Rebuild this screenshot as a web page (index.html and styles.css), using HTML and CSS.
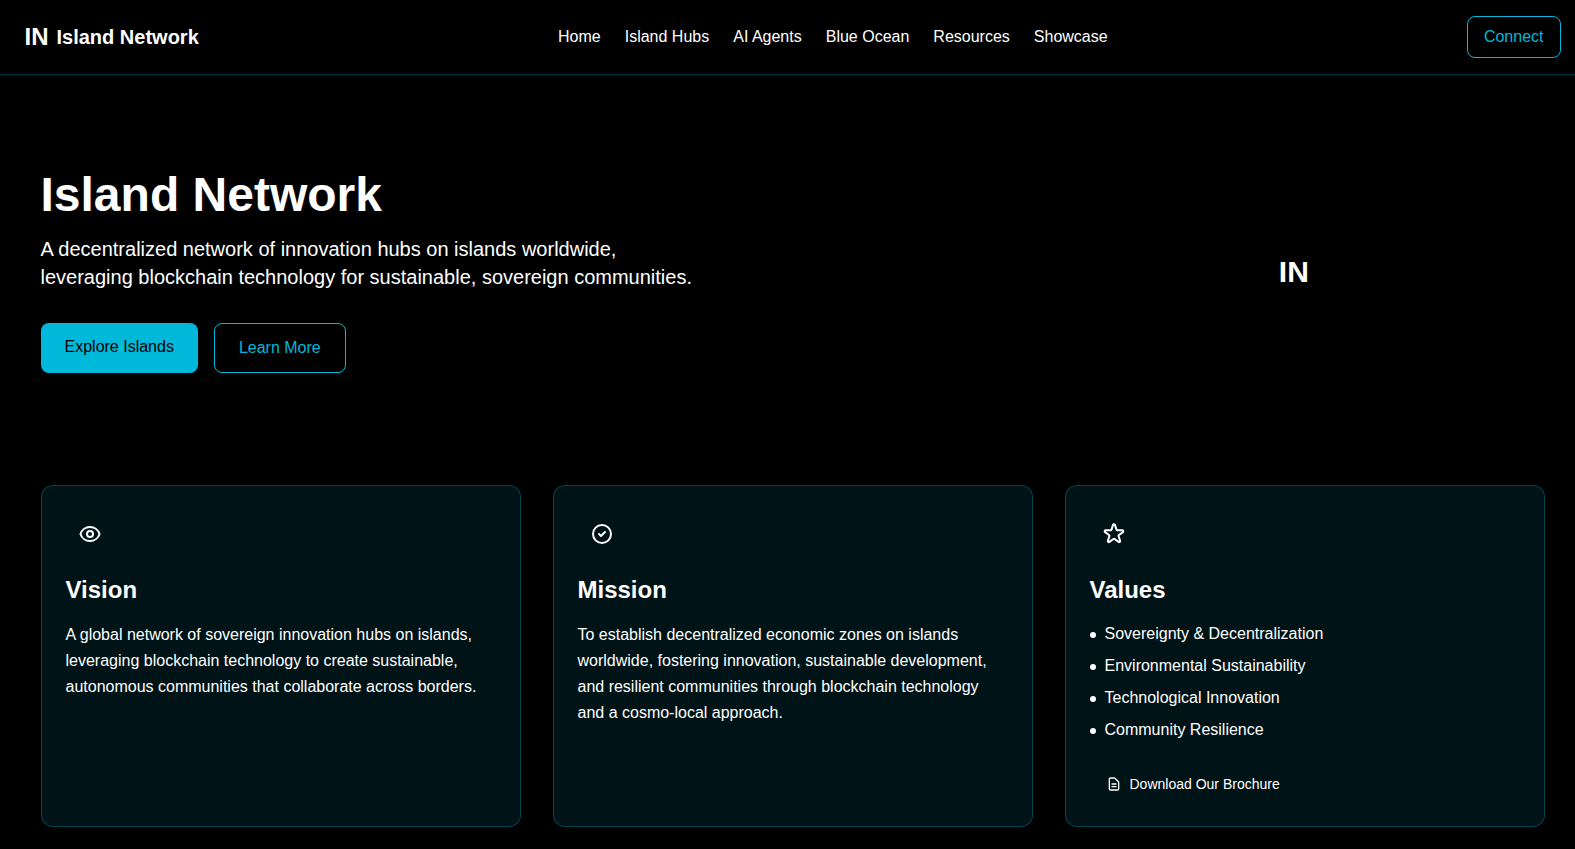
FILE: index.html
```html
<!DOCTYPE html>
<html lang="en">
<head>
<meta charset="utf-8">
<meta name="viewport" content="width=device-width, initial-scale=1">
<title>Island Network</title>
<link rel="stylesheet" href="styles.css">
</head>
<body>
<header class="header">
  <div class="container header-row">
    <a class="brand" href="#"><span class="brand-mark">IN</span><span class="brand-name">Island Network</span></a>
    <nav class="nav" aria-label="Main">
      <a href="#">Home</a>
      <a href="#">Island Hubs</a>
      <a href="#">AI Agents</a>
      <a href="#">Blue Ocean</a>
      <a href="#">Resources</a>
      <a href="#">Showcase</a>
    </nav>
    <button class="button connect" type="button">Connect</button>
  </div>
</header>
<main class="main">
  <section class="container hero">
    <div class="hero-copy">
      <h1>Island Network</h1>
      <p class="lead">A decentralized network of innovation hubs on islands worldwide, leveraging blockchain technology for sustainable, sovereign communities.</p>
      <div class="actions">
        <a class="button primary" href="#">Explore Islands</a>
        <a class="button secondary" href="#">Learn More</a>
      </div>
    </div>
    <div class="hero-mark">IN</div>
  </section>
  <section class="container cards">
    <article class="card">
      <div class="card-icon">
        <svg class="icon" viewBox="0 0 24 24" aria-hidden="true"><path d="M15 12a3 3 0 11-6 0 3 3 0 016 0z"/><path d="M2.458 12C3.732 7.943 7.523 5 12 5c4.478 0 8.268 2.943 9.542 7-1.274 4.057-5.064 7-9.542 7-4.477 0-8.268-2.943-9.542-7z"/></svg>
      </div>
      <h2>Vision</h2>
      <p>A global network of sovereign innovation hubs on islands, leveraging blockchain technology to create sustainable, autonomous communities that collaborate across borders.</p>
    </article>
    <article class="card">
      <div class="card-icon">
        <svg class="icon" viewBox="0 0 24 24" aria-hidden="true"><path d="M9 12l2 2 4-4m6 2a9 9 0 11-18 0 9 9 0 0118 0z"/></svg>
      </div>
      <h2>Mission</h2>
      <p>To establish decentralized economic zones on islands worldwide, fostering innovation, sustainable development, and resilient communities through blockchain technology and a cosmo-local approach.</p>
    </article>
    <article class="card">
      <div class="card-icon">
        <svg class="icon" viewBox="0 0 24 24" aria-hidden="true"><path d="M11.049 2.927c.3-.921 1.603-.921 1.902 0l1.519 4.674a1 1 0 00.95.69h4.915c.969 0 1.371 1.24.588 1.81l-3.976 2.888a1 1 0 00-.363 1.118l1.518 4.674c.3.922-.755 1.688-1.538 1.118l-3.976-2.888a1 1 0 00-1.176 0l-3.976 2.888c-.783.57-1.838-.197-1.538-1.118l1.518-4.674a1 1 0 00-.363-1.118l-3.976-2.888c-.784-.57-.38-1.81.588-1.81h4.914a1 1 0 00.951-.69l1.519-4.674z"/></svg>
      </div>
      <h2>Values</h2>
      <ul class="values">
        <li>Sovereignty &amp; Decentralization</li>
        <li>Environmental Sustainability</li>
        <li>Technological Innovation</li>
        <li>Community Resilience</li>
      </ul>
      <a class="brochure" href="#">
        <svg class="icon icon-small" viewBox="0 0 24 24" aria-hidden="true"><path d="M9 12h6m-6 4h6m2 5H7a2 2 0 01-2-2V5a2 2 0 012-2h5.586a1 1 0 01.707.293l5.414 5.414a1 1 0 01.293.707V19a2 2 0 01-2 2z"/></svg>
        Download Our Brochure
      </a>
    </article>
  </section>
</main>
</body>
</html>
```
FILE: styles.css
```css
* {
  box-sizing: border-box;
}

body {
  margin: 0;
  background: #000;
  color: #fff;
  font: 16px/24px "Liberation Sans", Arial, sans-serif;
}

h1, h2, p, ul {
  margin: 0;
}

a {
  color: inherit;
  text-decoration: none;
}

.header,
.main {
  padding-left: 10px;
}

.header {
  border-bottom: 1px solid rgba(0, 184, 217, 0.3);
}

.container {
  max-width: 1536px;
  margin: 0 auto;
}

.header-row {
  display: flex;
  align-items: center;
  justify-content: space-between;
  padding: 16px 0;
}

.brand {
  display: flex;
  align-items: center;
  gap: 8px;
}

.brand-mark {
  font-size: 24px;
  line-height: 32px;
  font-weight: 700;
}

.brand-name {
  font-size: 20px;
  line-height: 28px;
  font-weight: 700;
}

.nav {
  display: flex;
  gap: 24px;
}

.button {
  font: inherit;
  border: 1px solid #00b8d9;
  border-radius: 8px;
  background: transparent;
  color: #00b8d9;
}

.connect {
  padding: 8px 16px;
}

.hero {
  display: grid;
  grid-template-columns: 2fr 1fr;
  align-items: center;
  padding: 96px 16px 80px;
}

.hero h1 {
  margin-bottom: 16px;
  font-size: 48px;
  line-height: 48px;
}

.lead {
  max-width: 672px;
  margin-bottom: 32px;
  font-size: 20px;
  line-height: 28px;
}

.actions {
  display: flex;
  gap: 16px;
}

.actions .button {
  padding: 12px 24px;
}

.actions .primary {
  border: 0;
  background: #00b8d9;
  color: #000;
}

.hero-mark {
  text-align: center;
  font-size: 30px;
  line-height: 36px;
  font-weight: 700;
}

.cards {
  display: grid;
  grid-template-columns: repeat(3, 1fr);
  gap: 32px;
  padding: 32px 16px 16px;
}

.card {
  padding: 24px;
  border: 1px solid rgba(0, 184, 217, 0.3);
  border-radius: 12px;
  background: rgba(0, 184, 217, 0.1);
}

.card-icon {
  display: flex;
  align-items: center;
  justify-content: center;
  width: 48px;
  height: 48px;
  margin-bottom: 16px;
}

.icon {
  width: 24px;
  height: 24px;
  fill: none;
  stroke: currentColor;
  stroke-width: 2;
  stroke-linecap: round;
  stroke-linejoin: round;
}

.icon-small {
  width: 16px;
  height: 16px;
}

.card h2 {
  margin-bottom: 16px;
  font-size: 24px;
  line-height: 32px;
}

.card p {
  line-height: 26px;
}

.values {
  padding: 0;
  list-style: none;
}

.values li {
  display: flex;
  align-items: center;
  gap: 9px;
  margin-bottom: 8px;
}

.values li::before {
  content: "";
  width: 6px;
  height: 6px;
  margin-top: 2px;
  border-radius: 50%;
  background: currentColor;
}

.brochure {
  display: inline-flex;
  align-items: center;
  gap: 8px;
  padding: 8px 16px;
  margin-top: 16px;
  font-size: 14px;
  line-height: 20px;
}
```
